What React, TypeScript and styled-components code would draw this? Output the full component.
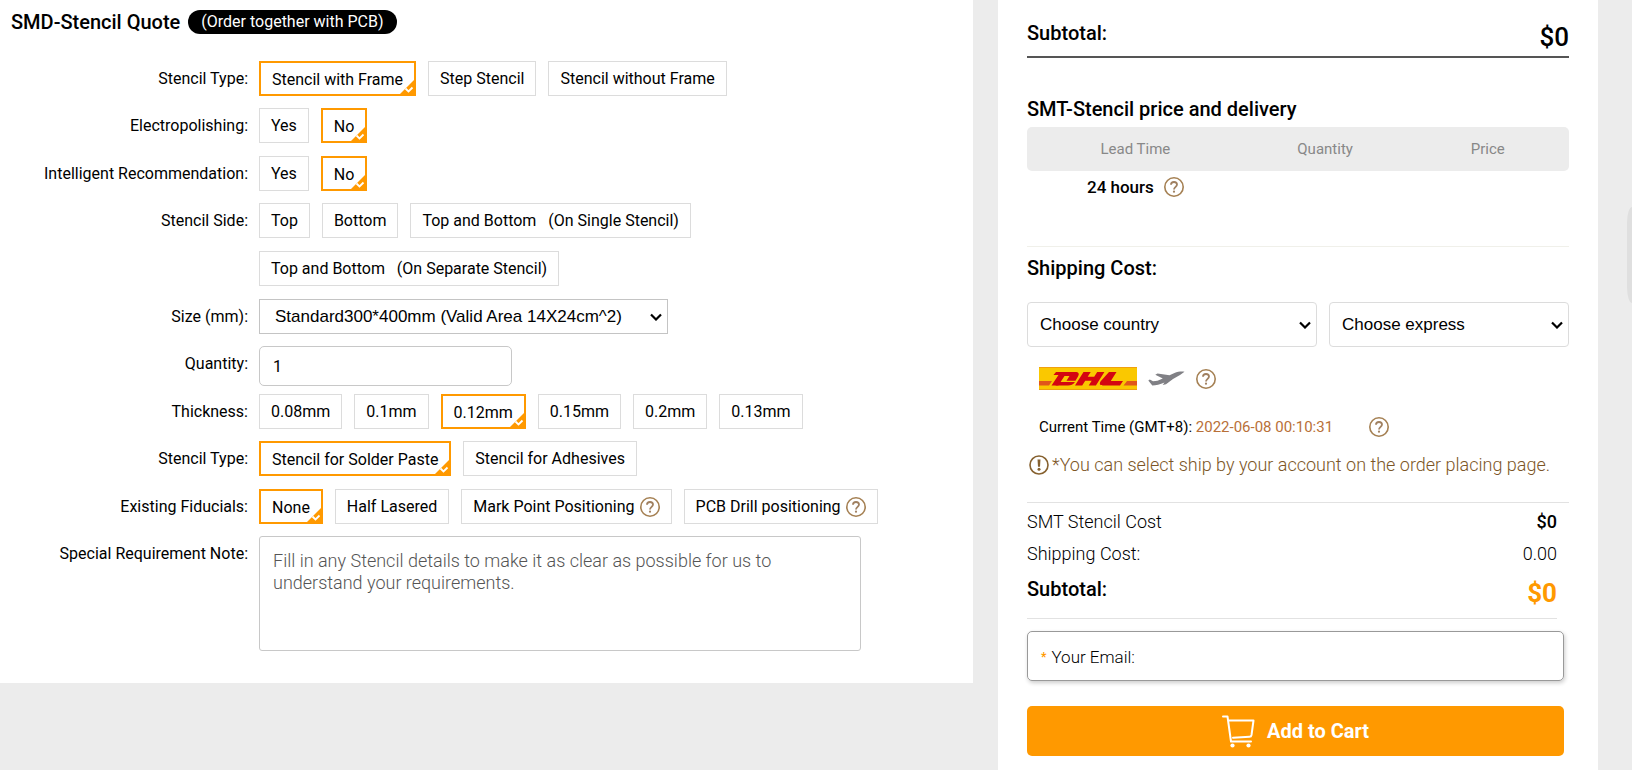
import React from "react";
import styled, { createGlobalStyle, css } from "styled-components";

const ORANGE = "#ff9900";
const BRONZE = "#7c5626";

const GlobalStyle = createGlobalStyle`
  *, *::before, *::after { box-sizing: border-box; }
  body {
    margin: 0;
    background: #ececec;
    color: #000;
    font: 16px/24px Roboto, "Liberation Sans", sans-serif;
  }
`;

const Page = styled.div`
  display: grid;
  grid-template-columns: minmax(0, 1fr) 600px;
  column-gap: 25px;
  align-items: start;
  min-height: 100vh;
  padding-right: 34px;
`;

/* ---------- Quote form ---------- */

const QuotePanel = styled.form`
  padding: 10px 11px 32px;
  background: #fff;
`;

const QuoteHeader = styled.header`
  display: flex;
  align-items: center;
  gap: 8px;
  margin-bottom: 27px;
`;

const Heading = styled.h2`
  margin: 0;
  font-size: 20px;
  line-height: 24px;
  font-weight: 500;
`;

const Pill = styled.span`
  padding: 0 13px;
  border-radius: 12px;
  background: #000;
  color: #fff;
  line-height: 24px;
`;

const Field = styled.div`
  display: grid;
  grid-template-columns: 237px minmax(0, 1fr);
  column-gap: 11px;
  align-items: start;
  padding-bottom: 12px;

  &:nth-of-type(even) { padding-bottom: 13px; }
  &:last-of-type { padding-bottom: 0; }
`;

const FieldLabel = styled.label`
  text-align: right;
  line-height: 35px;
`;

const Options = styled.div`
  display: flex;
  flex-wrap: wrap;
  gap: 13px 12px;
  max-width: 640px;
`;

const OptionBox = styled.label<{ $selected: boolean }>`
  position: relative;
  display: flex;
  align-items: center;
  gap: 5px;
  height: 35px;
  padding: 1px 11px 0;
  border: 1px solid #dcdcdc;
  line-height: 24px;
  white-space: pre;
  cursor: pointer;
  ${(p) => p.$selected && css`
    padding-top: 2px;
    border: 2px solid ${ORANGE};
  `}
`;

const HiddenRadio = styled.input`
  position: absolute;
  inset: 0;
  margin: 0;
  opacity: 0;
  cursor: pointer;
`;

const Corner = styled.svg`
  position: absolute;
  right: 0;
  bottom: 0;
`;

const SelectWrap = styled.div`
  position: relative;
  display: flex;
`;

const Chevron = styled.svg`
  position: absolute;
  top: 50%;
  right: 6px;
  margin-top: -4px;
  pointer-events: none;
`;

const Select = styled.select<{ $tall?: boolean }>`
  appearance: none;
  width: 100%;
  height: ${(p) => (p.$tall ? 45 : 35)}px;
  padding: 0 ${(p) => (p.$tall ? 12 : 15)}px;
  border: 1px solid ${(p) => (p.$tall ? "#dcdcdc" : "#c4c4c4")};
  border-radius: ${(p) => (p.$tall ? 4 : 0)}px;
  background: #fff;
  color: #000;
  font: 17px "Liberation Sans", Arial, sans-serif;
`;

const SizeWrap = styled(SelectWrap)`
  max-width: 409px;
`;

const QuantityInput = styled.input`
  width: 253px;
  height: 40px;
  margin-bottom: -5px;
  padding: 0 13px;
  border: 1px solid #c8c8c8;
  border-radius: 5px;
  background: #fff;
  font: inherit;
`;

const Note = styled.textarea`
  display: block;
  width: 100%;
  max-width: 602px;
  height: 115px;
  padding: 13px;
  border: 1px solid #c8c8c8;
  border-radius: 3px;
  resize: none;
  font: 300 18px/22px Roboto, "Liberation Sans", sans-serif;

  &::placeholder { color: #555; opacity: 1; }
`;

/* ---------- Summary ---------- */

const Summary = styled.aside`
  align-self: stretch;
  padding: 21px 29px 14px;
  background: #fff;
`;

const TotalRow = styled.div`
  display: flex;
  justify-content: space-between;
  height: 37px;
  border-bottom: 2px solid #555;
`;

const Amount = styled.strong<{ $accent?: boolean }>`
  font-size: 26px;
  line-height: 32px;
  font-weight: ${(p) => (p.$accent ? 700 : 500)};
  color: ${(p) => (p.$accent ? ORANGE : "#000")};
`;

const PriceSection = styled.section`
  padding-top: 39px;
  border-bottom: 1px solid #f0f0ea;
  height: 189px;
`;

const PriceTable = styled.table`
  width: 100%;
  margin-top: 6px;
  table-layout: fixed;
  border-collapse: separate;
  border-spacing: 0;

  th {
    height: 44px;
    padding: 0;
    background: #ececec;
    color: #888;
    font-size: 15px;
    font-weight: 400;
  }
  th:first-child { width: 40%; border-radius: 5px 0 0 5px; }
  th:last-child { border-radius: 0 5px 5px 0; }
  td { padding: 4px 0; }
`;

const LeadTime = styled.div`
  display: flex;
  align-items: center;
  justify-content: center;
  gap: 10px;
  font-size: 17px;
  font-weight: 500;
`;

const ShippingSection = styled.section`
  padding: 9px 0 25px;
  border-bottom: 1px solid #e2e2e2;
`;

const ShippingSelects = styled.div`
  display: grid;
  grid-template-columns: 290fr 240fr;
  gap: 12px;
  margin-top: 22px;
`;

const Carrier = styled.div`
  display: flex;
  align-items: center;
  gap: 11px;
  padding: 20px 12px 0;
`;

const Clock = styled.div`
  display: flex;
  align-items: center;
  gap: 36px;
  padding: 25px 12px 0;
  font-size: 15px;
`;

const Stamp = styled.time`
  color: #b87038;
`;

const Notice = styled.p`
  display: flex;
  align-items: center;
  gap: 3px;
  margin: 14px 0 0;
  padding-left: 2px;
  color: ${BRONZE};
  font-size: 18px;
  font-weight: 300;
  white-space: nowrap;
`;

const Costs = styled.dl`
  margin: 0 12px 12px 0;
  padding-top: 3px;
  border-bottom: 1px solid #e2e2e2;
`;

const CostRow = styled.div`
  display: flex;
  justify-content: space-between;
  height: 32px;
  font-size: 18px;
  font-weight: 300;
  line-height: 32px;

  &:last-child { height: 48px; padding-top: 7px; }
  dd { margin: 0; }
  b { font-weight: 500; }
`;

const EmailBox = styled.label`
  display: flex;
  align-items: center;
  gap: 5px;
  height: 50px;
  margin-right: 5px;
  padding: 2px 13px 0;
  border: 1px solid #999;
  border-radius: 5px;
  box-shadow: 1px 2px 4px rgba(0, 0, 0, 0.2);
  font-size: 17px;
  font-weight: 300;
`;

const Star = styled.span`
  color: ${ORANGE};
  font-size: 12px;
  font-weight: 700;
`;

const EmailInput = styled.input`
  flex: 1;
  min-width: 0;
  border: 0;
  outline: 0;
  background: none;
  font: inherit;
`;

const CartButton = styled.button`
  display: flex;
  align-items: center;
  justify-content: center;
  gap: 12px;
  width: calc(100% - 5px);
  height: 50px;
  margin-top: 25px;
  border: 0;
  border-radius: 5px;
  background: ${ORANGE};
  color: #fff;
  font: 700 20px/24px Roboto, "Liberation Sans", sans-serif;
  cursor: pointer;
`;

const SideTab = styled.div`
  position: fixed;
  top: 207px;
  right: 0;
  width: 5px;
  height: 96px;
  border-radius: 5px 0 0 5px / 16px 0 0 16px;
  background: #dfdfdf;
`;

/* ---------- Icons ---------- */

const Help = () => (
  <svg width="20" height="20" viewBox="0 0 20 20" fill="none" role="img" aria-label="Help">
    <circle cx="10" cy="10" r="9.2" stroke="#a58053" strokeWidth="1.600" />
    <path d="M7 7.800C7 6 8.300 5 10 5s3 1 3 2.600c0 2.200-3 2.400-3 5" stroke="#a08060" strokeWidth="1.800" />
    <circle cx="10" cy="14.700" r="1.100" fill="#a08060" />
  </svg>
);

const Alert = () => (
  <svg width="20" height="20" viewBox="0 0 20 20" fill="none" aria-hidden="true">
    <circle cx="10" cy="10" r="9" stroke="#86612f" strokeWidth="1.600" />
    <path d="M8.500 4.500h3l-.5 7.300H9z" fill="#86612f" />
    <circle cx="10" cy="14.300" r="1.500" fill="#86612f" />
  </svg>
);

const DownArrow = () => (
  <Chevron width="12" height="8" viewBox="0 0 12 8" fill="none" aria-hidden="true">
    <path d="M1 1.500 6 6.500l5-5" stroke="#000" strokeWidth="2.200" />
  </Chevron>
);

const Tick = () => (
  <Corner width="14" height="14" viewBox="0 0 14 14" fill="none" aria-hidden="true">
    <path d="M14 0v14H0z" fill={ORANGE} />
    <path d="M5.500 8.500l3 3 4-4" stroke="#fff" strokeWidth="1.800" />
  </Corner>
);

const Dhl = () => (
  <svg width="98" height="23" viewBox="0 0 98 23" role="img" aria-label="DHL">
    <path d="M0 0h98v23H0z" fill="#fac800" />
    <path d="M0 .5h98M0 22.500h98" stroke="#f0a010" />
    <path d="M0 14h13l-3 4.500H0zM88 14h10v4.500H84.500z" fill="#e0561b" />
    <g fill="#d40511">
      <path d="M17 5h19c4 0 4.500 2 3 4.500l-2.500 4.200H27.500L30.500 9h-5l-6.200 9.500H12.500L19.500 8h-5z" />
      <path d="M19 15h17c-2 2.700-4 3.500-7 3.500H16.500z" />
      <path d="M44.500 5h7.200l-3 4.700h6.500L58.200 5h7.200l-8.500 13.500h-7.200l3-4.700h-6.500l-3 4.700H36z" />
      <path d="M70 5h7.500l-5.700 9H84l-3 4.500H64c-3.500 0-3.800-1.800-2.300-4.200z" />
    </g>
  </svg>
);

const Plane = () => (
  <svg width="37" height="15" viewBox="0 0 37 15" fill="#808085" aria-hidden="true">
    <path d="M36.500.8C34 .4 30 .5 26.500 2L21.500 4.200 9.500 2.400 7.300 3.800l7.500 3.700L9.500 9.700l-4.500.6L1.800 8.400.3 9.400l4 5.100C8 14.500 12 13 16.500 11.400l-1.800 2.600 3.300-.7L25 8l7-4z" />
  </svg>
);

const Cart = () => (
  <svg width="33" height="33" viewBox="0 0 33 33" fill="none" stroke="#fff" strokeWidth="2" strokeLinecap="round" strokeLinejoin="round" aria-hidden="true">
    <path d="M1 1.500h4.500L9 26.500h20M6.500 5.500h25l-2 14.500q-.3 1.700-2 1.800L11 22.800" />
    <circle cx="10.500" cy="30.500" r="2.100" fill="#fff" stroke="none" />
    <circle cx="26.500" cy="30.500" r="2.100" fill="#fff" stroke="none" />
  </svg>
);

/* ---------- Parts ---------- */

type Choice = { text: string; help?: boolean };
type GroupProps = { label: string; name: string; choices: Choice[]; initial?: number };

function ChoiceField({ label, name, choices, initial = -1 }: GroupProps) {
  const [selected, setSelected] = React.useState(initial);
  return (
    <Field role="radiogroup" aria-labelledby={name}>
      <FieldLabel as="span" id={name}>{label}</FieldLabel>
      <Options>
        {choices.map((choice, i) => (
          <OptionBox key={choice.text} $selected={i === selected}>
            <HiddenRadio type="radio" name={name} checked={i === selected} onChange={() => setSelected(i)} />
            {choice.text}
            {choice.help && <Help />}
            {i === selected && <Tick />}
          </OptionBox>
        ))}
      </Options>
    </Field>
  );
}

const list = (...texts: string[]): Choice[] => texts.map((text) => ({ text }));

export default function App() {
  return (
    <>
      <GlobalStyle />
      <Page>
        <QuotePanel>
          <QuoteHeader>
            <Heading>SMD-Stencil Quote</Heading>
            <Pill>(Order together with PCB)</Pill>
          </QuoteHeader>
          <ChoiceField label="Stencil Type:" name="frame" initial={0}
            choices={list("Stencil with Frame", "Step Stencil", "Stencil without Frame")} />
          <ChoiceField label="Electropolishing:" name="polish" initial={1} choices={list("Yes", "No")} />
          <ChoiceField label="Intelligent Recommendation:" name="recommend" initial={1} choices={list("Yes", "No")} />
          <ChoiceField label="Stencil Side:" name="side"
            choices={list("Top", "Bottom", "Top and Bottom   (On Single Stencil)", "Top and Bottom   (On Separate Stencil)")} />
          <Field>
            <FieldLabel htmlFor="size">Size (mm):</FieldLabel>
            <SizeWrap>
              <Select id="size">
                <option>Standard300*400mm (Valid Area 14X24cm^2)</option>
              </Select>
              <DownArrow />
            </SizeWrap>
          </Field>
          <Field>
            <FieldLabel htmlFor="quantity">Quantity:</FieldLabel>
            <QuantityInput id="quantity" defaultValue="1" />
          </Field>
          <ChoiceField label="Thickness:" name="thickness" initial={2}
            choices={list("0.08mm", "0.1mm", "0.12mm", "0.15mm", "0.2mm", "0.13mm")} />
          <ChoiceField label="Stencil Type:" name="purpose" initial={0}
            choices={list("Stencil for Solder Paste", "Stencil for Adhesives")} />
          <ChoiceField label="Existing Fiducials:" name="fiducials" initial={0}
            choices={[
              { text: "None" },
              { text: "Half Lasered" },
              { text: "Mark Point Positioning", help: true },
              { text: "PCB Drill positioning", help: true },
            ]} />
          <Field>
            <FieldLabel htmlFor="note">Special Requirement Note:</FieldLabel>
            <Note id="note" placeholder="Fill in any Stencil details to make it as clear as possible for us to understand your requirements." />
          </Field>
        </QuotePanel>

        <Summary>
          <TotalRow>
            <Heading>Subtotal:</Heading>
            <Amount>$0</Amount>
          </TotalRow>

          <PriceSection>
            <Heading>SMT-Stencil price and delivery</Heading>
            <PriceTable>
              <thead>
                <tr><th>Lead Time</th><th>Quantity</th><th>Price</th></tr>
              </thead>
              <tbody>
                <tr>
                  <td><LeadTime>24 hours <Help /></LeadTime></td>
                  <td />
                  <td />
                </tr>
              </tbody>
            </PriceTable>
          </PriceSection>

          <ShippingSection>
            <Heading>Shipping Cost:</Heading>
            <ShippingSelects>
              <SelectWrap>
                <Select $tall aria-label="Country"><option>Choose country</option></Select>
                <DownArrow />
              </SelectWrap>
              <SelectWrap>
                <Select $tall aria-label="Express"><option>Choose express</option></Select>
                <DownArrow />
              </SelectWrap>
            </ShippingSelects>
            <Carrier><Dhl /><Plane /><Help /></Carrier>
            <Clock>
              <span>Current Time (GMT+8): <Stamp>2022-06-08 00:10:31</Stamp></span>
              <Help />
            </Clock>
            <Notice>
              <Alert />
              <span>*You can select ship by your account on the order placing page.</span>
            </Notice>
          </ShippingSection>

          <Costs>
            <CostRow><dt>SMT Stencil Cost</dt><dd><b>$0</b></dd></CostRow>
            <CostRow><dt>Shipping Cost:</dt><dd>0.00</dd></CostRow>
            <CostRow><dt><Heading>Subtotal:</Heading></dt><dd><Amount $accent>$0</Amount></dd></CostRow>
          </Costs>

          <EmailBox>
            <Star>*</Star>Your Email:
            <EmailInput type="email" />
          </EmailBox>
          <CartButton type="button"><Cart />Add to Cart</CartButton>
        </Summary>
      </Page>
      <SideTab />
    </>
  );
}
